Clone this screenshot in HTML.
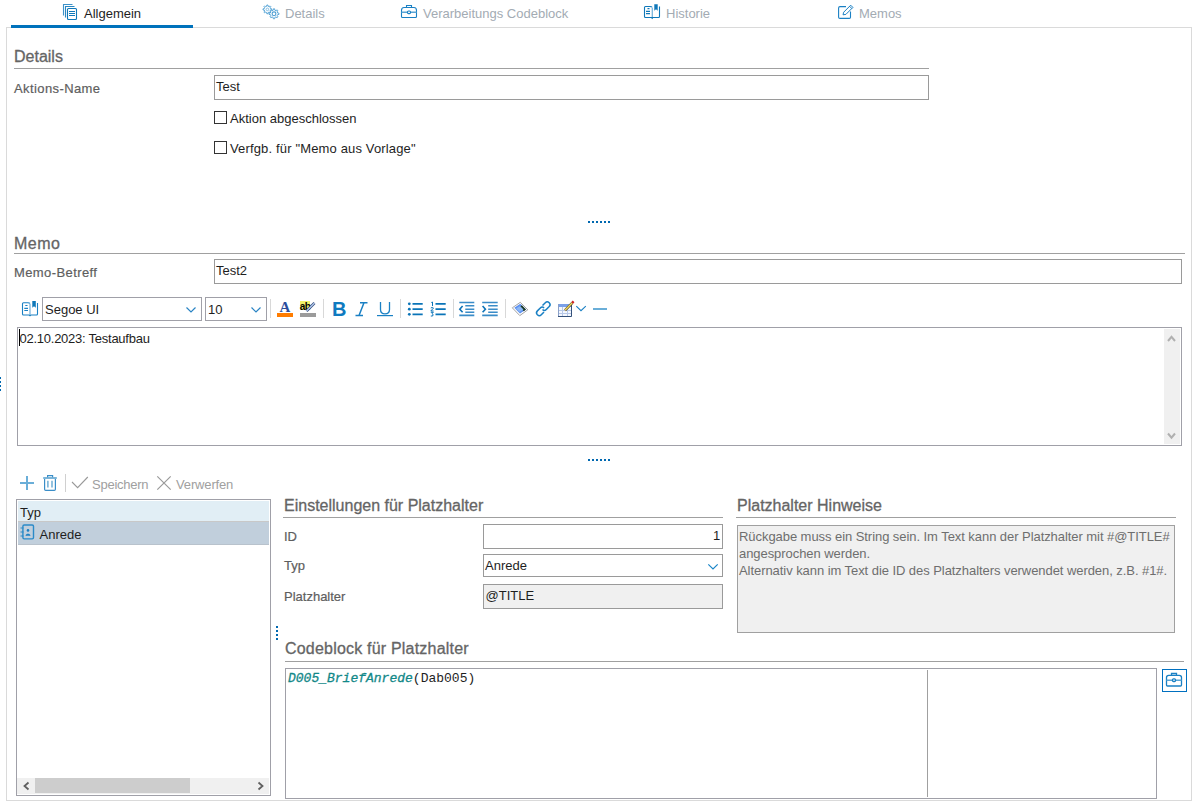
<!DOCTYPE html>
<html><head><meta charset="utf-8">
<style>
*{margin:0;padding:0;box-sizing:border-box}
html,body{width:1195px;height:803px;overflow:hidden;background:#fff}
body{position:relative;font-family:"Liberation Sans",sans-serif;font-size:13px;color:#1e1e1e}
.a{position:absolute}
.t{position:absolute;white-space:nowrap;line-height:13px}
.lbl{color:#5e5e5e;-webkit-text-stroke:0.2px #5e5e5e}
.hdr{color:#656565;font-size:16px;line-height:16px;-webkit-text-stroke:0.3px #656565}
.hl{position:absolute;height:1px;background:#a0a0a0}
.box{position:absolute;border:1px solid #9a9a9a;background:#fff}
.dot{position:absolute;width:2px;height:2px;background:#0068b0}
.tab{color:#a3abb3}
.gl{color:#a0a0a0}
svg{position:absolute;left:0;top:0}
</style></head><body>

<!-- frame -->
<div class="a" style="left:6px;top:27px;width:1186px;height:774px;border:1px solid #dadada"></div>
<div class="a" style="left:11px;top:25px;width:182px;height:3px;background:#0072bc"></div>

<!-- tabs -->
<div class="t" style="left:84px;top:7px;color:#1e1e1e">Allgemein</div>
<div class="t tab" style="left:285px;top:7px">Details</div>
<div class="t tab" style="left:423px;top:7px">Verarbeitungs Codeblock</div>
<div class="t tab" style="left:666px;top:7px">Historie</div>
<div class="t tab" style="left:859px;top:7px">Memos</div>

<!-- Details section -->
<div class="t hdr" style="left:14px;top:49px">Details</div>
<div class="hl" style="left:14px;top:68px;width:915px"></div>
<div class="t lbl" style="left:14px;top:82px;letter-spacing:0.4px">Aktions-Name</div>
<div class="box" style="left:214px;top:75px;width:715px;height:25px"></div>
<div class="t" style="left:216px;top:80px">Test</div>
<div class="a" style="left:214px;top:111px;width:13px;height:13px;border:1px solid #333"></div>
<div class="t" style="left:230px;top:112px">Aktion abgeschlossen</div>
<div class="a" style="left:214px;top:141px;width:13px;height:13px;border:1px solid #333"></div>
<div class="t" style="left:230px;top:142px;letter-spacing:0.15px">Verfgb. für "Memo aus Vorlage"</div>

<!-- splitter 1 -->
<div class="dot" style="left:588px;top:221px"></div><div class="dot" style="left:592px;top:221px"></div><div class="dot" style="left:596px;top:221px"></div><div class="dot" style="left:600px;top:221px"></div><div class="dot" style="left:604px;top:221px"></div><div class="dot" style="left:608px;top:221px"></div>

<!-- Memo -->
<div class="t hdr" style="left:14px;top:236px;letter-spacing:0.5px">Memo</div>
<div class="hl" style="left:14px;top:253px;width:1171px"></div>
<div class="t lbl" style="left:14px;top:266px;letter-spacing:0.4px">Memo-Betreff</div>
<div class="box" style="left:214px;top:259px;width:968px;height:25px"></div>
<div class="t" style="left:216px;top:264px">Test2</div>

<!-- editor toolbar -->
<div class="box" style="left:42px;top:297px;width:160px;height:24px;border-color:#a0a0a8"></div>
<div class="t" style="left:45px;top:303px">Segoe UI</div>
<div class="box" style="left:205px;top:297px;width:62px;height:24px;border-color:#a0a0a8"></div>
<div class="t" style="left:208px;top:303px">10</div>
<div class="a" style="left:270px;top:299px;width:1px;height:19px;background:#d8d8d8"></div>
<div class="a" style="left:323px;top:299px;width:1px;height:19px;background:#d8d8d8"></div>
<div class="a" style="left:400px;top:299px;width:1px;height:19px;background:#d8d8d8"></div>
<div class="a" style="left:453px;top:299px;width:1px;height:19px;background:#d8d8d8"></div>
<div class="a" style="left:505px;top:299px;width:1px;height:19px;background:#d8d8d8"></div>

<!-- editor -->
<div class="box" style="left:17px;top:327px;width:1165px;height:119px;border-color:#a0a0a8"></div>
<div class="a" style="left:1164px;top:329px;width:16px;height:115px;background:#f0f0f0"></div>
<div class="t" style="left:19.5px;top:332px;letter-spacing:-0.25px">02.10.2023: Testaufbau</div>
<div class="a" style="left:19px;top:329px;width:1px;height:17px;background:#000"></div>

<!-- left splitter dots -->
<div class="a" style="left:0;top:377px;width:1px;height:2px;background:#0068b0"></div>
<div class="a" style="left:0;top:381px;width:1px;height:2px;background:#0068b0"></div>
<div class="a" style="left:0;top:385px;width:1px;height:2px;background:#0068b0"></div>
<div class="a" style="left:0;top:389px;width:1px;height:2px;background:#0068b0"></div>

<!-- splitter 2 -->
<div class="dot" style="left:588px;top:459px"></div><div class="dot" style="left:592px;top:459px"></div><div class="dot" style="left:596px;top:459px"></div><div class="dot" style="left:600px;top:459px"></div><div class="dot" style="left:604px;top:459px"></div><div class="dot" style="left:608px;top:459px"></div>

<!-- list toolbar -->
<div class="a" style="left:65px;top:474px;width:1px;height:18px;background:#d0d0d0"></div>
<div class="t gl" style="left:92px;top:478px;letter-spacing:-0.25px">Speichern</div>
<div class="t gl" style="left:176px;top:478px;letter-spacing:-0.15px">Verwerfen</div>

<!-- list -->
<div class="box" style="left:16px;top:499px;width:255px;height:297px;border-color:#a0a0a8"></div>
<div class="a" style="left:18px;top:501px;width:251px;height:20px;background:#e1eef5"></div>
<div class="a" style="left:18px;top:521px;width:251px;height:1px;background:#c8c8c8"></div>
<div class="a" style="left:18px;top:522px;width:251px;height:22px;background:#c1cfdc"></div>
<div class="a" style="left:18px;top:544px;width:251px;height:1px;background:#b8c2cc"></div>
<div class="t" style="left:20px;top:506px">Typ</div>
<div class="t" style="left:39.5px;top:528px">Anrede</div>
<div class="a" style="left:17px;top:778px;width:252px;height:16px;background:#f0f0f0"></div>
<div class="a" style="left:35px;top:778px;width:155px;height:15px;background:#cdcdcd"></div>

<!-- vertical splitter dots -->
<div class="dot" style="left:276px;top:626px"></div><div class="dot" style="left:276px;top:630px"></div><div class="dot" style="left:276px;top:634px"></div><div class="dot" style="left:276px;top:638px"></div>

<!-- Einstellungen -->
<div class="t hdr" style="left:284px;top:498px">Einstellungen für Platzhalter</div>
<div class="hl" style="left:283px;top:517px;width:440px"></div>
<div class="t lbl" style="left:284px;top:530px">ID</div>
<div class="t lbl" style="left:284px;top:559px">Typ</div>
<div class="t lbl" style="left:284px;top:590px">Platzhalter</div>
<div class="box" style="left:483px;top:524px;width:240px;height:25px"></div>
<div class="t" style="left:713px;top:529px">1</div>
<div class="box" style="left:483px;top:554px;width:240px;height:23px"></div>
<div class="t" style="left:485px;top:559px">Anrede</div>
<div class="box" style="left:483px;top:584px;width:240px;height:25px;background:#f0f0f0"></div>
<div class="t" style="left:485.5px;top:589px">@TITLE</div>

<!-- Hinweise -->
<div class="t hdr" style="left:737px;top:498px">Platzhalter Hinweise</div>
<div class="hl" style="left:736px;top:517px;width:440px"></div>
<div class="box" style="left:737px;top:525px;width:438px;height:108px;background:#f0f0f0;border-color:#a0a0a0"></div>
<div class="t gl" style="left:739px;top:528px;color:#6e6e6e;line-height:17px;letter-spacing:-0.06px">Rückgabe muss ein String sein. Im Text kann der Platzhalter mit #@TITLE#<br>angesprochen werden.<br>Alternativ kann im Text die ID des Platzhalters verwendet werden, z.B. #1#.</div>

<!-- Codeblock -->
<div class="t hdr" style="left:285px;top:641px;letter-spacing:0.2px">Codeblock für Platzhalter</div>
<div class="hl" style="left:285px;top:661px;width:899px"></div>
<div class="box" style="left:285px;top:668px;width:872px;height:131px;border-color:#a0a0a8"></div>
<div class="a" style="left:927px;top:670px;width:1px;height:127px;background:#a0a0a0"></div>
<div class="t" style="left:288px;top:672px;font-family:'Liberation Mono',monospace;font-size:13px"><span style="color:#128888;font-style:italic;-webkit-text-stroke:0.3px #128888">D005_BriefAnrede</span>(Dab005)</div>
<div class="a" style="left:1162px;top:669px;width:25px;height:23px;border:1px solid #0070c0"></div>

<svg width="1195" height="803" viewBox="0 0 1195 803" fill="none" stroke-linecap="butt">
<!-- Allgemein icon -->
<g stroke="#0f78b9" stroke-width="1.1">
<path d="M63.5,15.5 V4.5 H72.5" stroke="#3d92c9"/>
<path d="M65.5,17.5 V6.5 H74.5" stroke="#2a87c2"/>
<rect x="67.5" y="8.5" width="9" height="11" rx="1"/>
<path d="M69,11.5 H75 M69,13.5 H75 M69,15.5 H75"/>
</g>
<!-- Details gears -->
<g stroke="#4a9dd2" stroke-width="0.9" stroke-linejoin="round">
<path d="M270.52,8.70 L271.76,8.82 L271.76,9.98 L270.52,10.10 L270.10,11.11 L270.89,12.07 L270.07,12.89 L269.11,12.10 L268.10,12.52 L267.98,13.76 L266.82,13.76 L266.70,12.52 L265.69,12.10 L264.73,12.89 L263.91,12.07 L264.70,11.11 L264.28,10.10 L263.04,9.98 L263.04,8.82 L264.28,8.70 L264.70,7.69 L263.91,6.73 L264.73,5.91 L265.69,6.70 L266.70,6.28 L266.82,5.04 L267.98,5.04 L268.10,6.28 L269.11,6.70 L270.07,5.91 L270.89,6.73 L270.10,7.69 Z"/>
<circle cx="267.4" cy="9.4" r="1.3" stroke="#7ab8e0"/>
<path d="M277.61,12.99 L278.96,13.14 L278.96,14.46 L277.61,14.61 L277.12,15.78 L277.97,16.84 L277.04,17.77 L275.98,16.92 L274.81,17.41 L274.66,18.76 L273.34,18.76 L273.19,17.41 L272.02,16.92 L270.96,17.77 L270.03,16.84 L270.88,15.78 L270.39,14.61 L269.04,14.46 L269.04,13.14 L270.39,12.99 L270.88,11.82 L270.03,10.76 L270.96,9.83 L272.02,10.68 L273.19,10.19 L273.34,8.84 L274.66,8.84 L274.81,10.19 L275.98,10.68 L277.04,9.83 L277.97,10.76 L277.12,11.82 Z" fill="#fff"/>
<circle cx="274" cy="13.8" r="1.9" stroke-width="1.1"/>
</g>
<!-- toolbox tab -->
<g stroke="#1a80c4" stroke-width="1.1">
<path d="M401.5,10.5 Q401.5,7.5 404,7.5 H414 Q416.5,7.5 416.5,10.5 V16.5 Q416.5,17.5 415.5,17.5 H402.5 Q401.5,17.5 401.5,16.5 Z"/>
<path d="M406.5,7.5 V5.5 H411.5 V7.5"/>
<path d="M401.5,12.3 H407.5 M410.5,12.3 H416.5" stroke="#5aa5d5" stroke-width="1.4"/>
<rect x="407.5" y="11" width="3" height="2.6" rx="1"/>
</g>
<!-- Historie book -->
<g stroke="#0f78b9" stroke-width="1.1">
<path d="M652,7 Q651.5,6.5 650,6.5 H645.5 Q644.5,6.5 644.5,7.5 V16.5 Q644.5,17.5 645.5,17.5 H658.5 Q659.5,17.5 659.5,16.5 V6.5"/>
<path d="M652.3,7.5 V17" stroke="#7ab5dd" stroke-width="1.3"/>
<path d="M654.3,4.3 H657.7 V10.8 L656,9.3 L654.3,10.8 Z" fill="#0f78b9" stroke="none"/>
<path d="M647.5,8.7 H649.5 M646,11.3 H650 M646,13.7 H650" stroke-width="1.2"/>
<path d="M650.8,17.5 L652.2,19.2 L653.6,17.5" fill="#0f78b9" stroke="none"/>
</g>
<!-- Memos -->
<g stroke="#1a80c4" stroke-width="1.1">
<path d="M846,6.6 H840 Q838.6,6.6 838.6,8 V17.2 Q838.6,18.4 840,18.4 H849.3 Q850.5,18.4 850.5,17.2 V11.4"/>
<path d="M843,14.8 L843.7,12.2 L850.7,5.2 L852.9,7.4 L845.9,14.4 Z" stroke-width="1"/>
<path d="M849.6,6.3 L851.8,8.5" stroke-width="1"/>
</g>

<!-- editor toolbar: book icon -->
<g stroke="#1a80c4" stroke-width="1.1">
<path d="M30,303.3 Q29.5,302.8 28,302.8 H23.5 Q22.5,302.8 22.5,303.8 V314 Q22.5,315 23.5,315 H36.5 Q37.5,315 37.5,314 V303"/>
<path d="M30,303.8 V314.5" stroke="#7ab5dd" stroke-width="1.3"/>
<path d="M32.3,301 H35.8 V307.8 L34,306.3 L32.3,307.8 Z" fill="#0f78b9" stroke="none"/>
<path d="M25.3,305.5 H27.5 M24.3,308.3 H28 M24.3,310.5 H28" stroke-width="1.2"/>
<path d="M28.7,315 L30,316.5 L31.3,315" fill="#0f78b9" stroke="none"/>
</g>
<!-- combo chevrons -->
<path d="M186.5,307.5 L191,312 L195.5,307.5" stroke="#2a84c4" stroke-width="1.2"/>
<path d="M251.5,307.5 L256,312 L260.5,307.5" stroke="#2a84c4" stroke-width="1.2"/>
<!-- font color A -->
<text x="279.5" y="312" font-family="Liberation Serif" font-weight="bold" font-size="15" fill="#2b4d9c" stroke="none">A</text>
<rect x="277" y="313" width="16" height="4" fill="#ff7c00" stroke="none"/>
<!-- highlight -->
<rect x="300" y="301" width="10" height="9" fill="#f2f26b" stroke="none"/>
<text x="299.8" y="309.5" font-family="Liberation Sans" font-weight="bold" font-size="10" fill="#000" stroke="none" letter-spacing="-0.6">ab</text>
<path d="M306.5,311 L314.5,303" stroke="#334a78" stroke-width="2.6"/>
<path d="M306.5,311 L314.5,303" stroke="#b8cdf0" stroke-width="1.2"/>
<rect x="300" y="313" width="16" height="4" fill="#9b9b9b" stroke="none"/>
<!-- B I U -->
<text x="332" y="316" font-family="Liberation Sans" font-weight="bold" font-size="20" fill="#0f7ac0" stroke="none">B</text>
<path d="M360,302.8 H367.5 M355.5,315.5 H363 M364,302.8 L359,315.5" stroke="#1a80c4" stroke-width="1.5"/>
<path d="M380.5,302 V309.5 Q380.5,313.8 385,313.8 Q389.5,313.8 389.5,309.5 V302" stroke="#1a80c4" stroke-width="1.3"/>
<path d="M377,315.6 H393" stroke="#1a80c4" stroke-width="1.2"/>
<!-- bullets -->
<g fill="#0a74b8" stroke="none">
<circle cx="409.3" cy="303.8" r="1.4"/><circle cx="409.3" cy="309.2" r="1.4"/><circle cx="409.3" cy="314.3" r="1.4"/>
</g>
<path d="M412.5,303.8 H422.7 M412.5,309.2 H422.7 M412.5,314.3 H422.7" stroke="#0a74b8" stroke-width="1.8"/>
<g stroke="#0a74b8" stroke-width="1">
<path d="M431.3,302.5 L432.5,302 V306"/>
<path d="M430.8,308 Q432.5,306.8 433.5,308 L430.8,311 H433.6"/>
<path d="M430.8,312.3 H433.3 L432,313.7 Q434,314.2 432.6,316 L430.8,316"/>
</g>
<path d="M435.5,303.8 H445.7 M435.5,309.2 H445.7 M435.5,314.3 H445.7" stroke="#0a74b8" stroke-width="1.8"/>
<!-- outdent / indent -->
<g stroke="#3a8cc8" stroke-width="1.6">
<path d="M459.3,302.5 H474.3 M465.3,305.8 H474.3 M465.3,309.2 H474.3 M465.3,312.3 H474.3 M459.3,315.4 H474.3"/>
<path d="M482.2,302.5 H497.7 M488.2,305.8 H497.7 M488.2,309.2 H497.7 M488.2,312.3 H497.7 M482.2,315.4 H497.7"/>
</g>
<path d="M462.6,306 L459.8,309.2 L462.6,312.3" stroke="#0f74b8" stroke-width="1.6"/>
<path d="M482.6,306 L485.4,309.2 L482.6,312.3" stroke="#0f74b8" stroke-width="1.6"/>
<!-- image icon -->
<path d="M512.3,307.8 L520.3,302.3 L527.8,309.8 L519.8,315.6 Z" fill="#fff" stroke="#9a9a9a" stroke-width="0.9"/>
<path d="M514.3,307.8 L520.3,303.8 L526,309.6 L520,313.6 Z" fill="#5b8ff0" stroke="none"/>
<path d="M521.8,305.3 L526,309.6 L523.8,311.2 L519.8,307 Z" fill="#1c3a22" stroke="none"/>
<path d="M516,308.5 L520,306 L523.5,309.5 L519.5,312 Z" fill="#8ab7f5" stroke="none"/>
<!-- link -->
<g stroke="#1a80c4" stroke-width="1.5">
<path d="M542.5,305.5 L545.3,302.7 Q547.2,300.8 549.2,302.7 Q551.1,304.6 549.2,306.6 L546.3,309.5 Q544.4,311.4 542.5,309.5"/>
<path d="M544,312 L541.3,314.8 Q539.4,316.7 537.4,314.8 Q535.5,312.8 537.4,310.9 L540.3,308 Q542.2,306.1 544.1,308"/>
</g>
<!-- table icon -->
<rect x="558" y="304" width="14" height="13" fill="#f4f7fd" stroke="none"/>
<rect x="558" y="304" width="14" height="3" fill="#7aa0e8" stroke="none"/>
<path d="M558,310.5 H572 M558,313.5 H572 M562.5,307 V317 M567.5,307 V317" stroke="#b7c8e8" stroke-width="1"/>
<path d="M558.5,304 V316.5" stroke="#8aa0c8" stroke-width="1"/>
<path d="M558,316.5 H571.5 V304" stroke="#34507a" stroke-width="1"/>
<path d="M565,310.3 L572.3,302.8" stroke="#5a4a20" stroke-width="2.6"/>
<path d="M565,310.3 L572.3,302.8" stroke="#f0d860" stroke-width="1.4"/>
<path d="M572.2,302.8 L573.6,301.4" stroke="#d02020" stroke-width="2.4"/>
<!-- chevron + hr -->
<path d="M576.3,306.2 L581,310.7 L585.8,306.2" stroke="#1a80c4" stroke-width="1.1"/>
<rect x="593" y="308" width="14" height="2" fill="#6aaed8" stroke="none"/>

<!-- editor scroll arrows -->
<path d="M1168,341 L1171.5,336.8 L1175,341" stroke="#b0b0b0" stroke-width="2"/>
<path d="M1168,433.5 L1171.5,437.7 L1175,433.5" stroke="#b0b0b0" stroke-width="2"/>

<!-- list toolbar -->
<path d="M20,483 H34 M27,476 V490" stroke="#6aaed8" stroke-width="2"/>
<g stroke="#3a8ec8" stroke-width="1.2">
<path d="M43.2,478 H56.8" stroke-width="1.6" stroke="#5aa3d0"/>
<path d="M47.6,477.3 V475.6 H52.6 V477.3"/>
<path d="M44.6,479 V489.3 Q44.6,490.4 45.7,490.4 H54.3 Q55.4,490.4 55.4,489.3 V479"/>
<path d="M47.9,480.8 V487.6 M52,480.8 V487.6" stroke-width="1.3" stroke="#5aa3d0"/>
</g>
<path d="M72,482 L77.6,487.7 L87.8,477" stroke="#999" stroke-width="1.1"/>
<path d="M157.3,476.3 L170.7,489.7 M170.7,476.3 L157.3,489.7" stroke="#9a9a9a" stroke-width="1.2"/>

<!-- address book icon -->
<g stroke="#2a8ac8" stroke-width="1.4">
<rect x="22.9" y="525" width="10.6" height="13.9" rx="1.3"/>
<path d="M20.5,528 H23.5 M20.5,532 H23.5 M20.5,536 H23.5" stroke-width="1.2"/>
</g>
<circle cx="28" cy="530.4" r="1.3" fill="#1a80c4" stroke="none"/>
<path d="M25.8,535.3 Q28,532.5 30.2,535.3 Z" fill="#1a80c4" stroke="#1a80c4" stroke-width="0.8"/>

<!-- list scroll arrows -->
<path d="M28.5,782.5 L24.5,786 L28.5,789.5" stroke="#606060" stroke-width="1.8"/>
<path d="M258.5,782.5 L262.5,786 L258.5,789.5" stroke="#606060" stroke-width="1.8"/>

<!-- typ chevron -->
<path d="M708.3,564.4 L713,569 L717.7,564.4" stroke="#1a86c8" stroke-width="1.2"/>

<!-- toolbox button icon -->
<g stroke="#1a80c4" stroke-width="1.3">
<path d="M1166.5,677.5 Q1166.5,675.3 1168.7,675.3 H1179.3 Q1181.5,675.3 1181.5,677.5 V685 Q1181.5,686 1180.5,686 H1167.5 Q1166.5,686 1166.5,685 Z"/>
<path d="M1171.5,675.3 V673.5 H1176.5 V675.3"/>
<path d="M1166.5,680.2 H1172.5 M1175.5,680.2 H1181.5" stroke="#5aa5d5" stroke-width="1.5"/>
<rect x="1172.5" y="678.9" width="3" height="2.6" rx="1"/>
</g>
</svg>
</body></html>
